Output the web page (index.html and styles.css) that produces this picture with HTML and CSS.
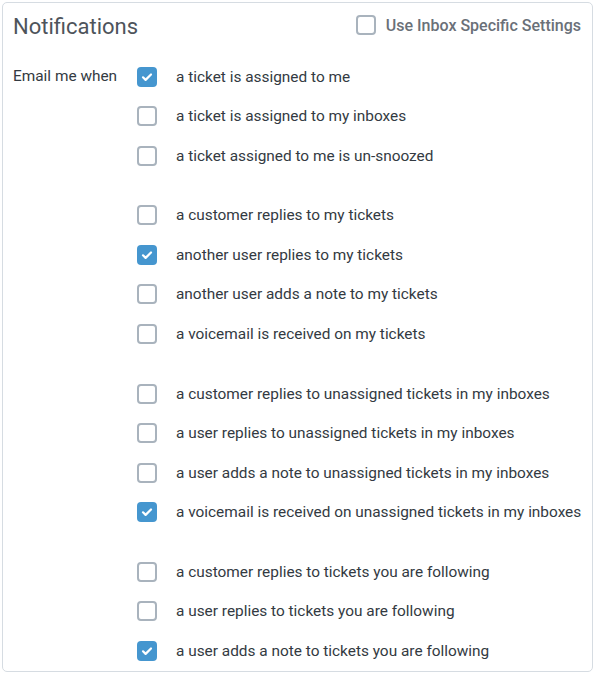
FILE: index.html
```html
<!DOCTYPE html>
<html>
<head>
<meta charset="utf-8">
<link rel="stylesheet" href="styles.css">
</head>
<body>
<div class="card">
  <div class="header">
    <h1 class="title">Notifications</h1>
    <label class="inbox-toggle">
      <span class="box"></span>
      <span class="inbox-label">Use Inbox Specific Settings</span>
    </label>
  </div>
  <div class="body">
    <div class="side-label">Email me when</div>
    <div class="options">
      <div class="group">
        <div class="row"><span class="box checked"><svg viewBox="0 0 20 20"><path d="M6 10.3l2.6 2.6L14 7.5"/></svg></span><span class="text">a ticket is assigned to me</span></div>
        <div class="row"><span class="box"></span><span class="text">a ticket is assigned to my inboxes</span></div>
        <div class="row"><span class="box"></span><span class="text">a ticket assigned to me is un-snoozed</span></div>
      </div>
      <div class="group">
        <div class="row"><span class="box"></span><span class="text">a customer replies to my tickets</span></div>
        <div class="row"><span class="box checked"><svg viewBox="0 0 20 20"><path d="M6 10.3l2.6 2.6L14 7.5"/></svg></span><span class="text">another user replies to my tickets</span></div>
        <div class="row"><span class="box"></span><span class="text">another user adds a note to my tickets</span></div>
        <div class="row"><span class="box"></span><span class="text">a voicemail is received on my tickets</span></div>
      </div>
      <div class="group">
        <div class="row"><span class="box"></span><span class="text">a customer replies to unassigned tickets in my inboxes</span></div>
        <div class="row"><span class="box"></span><span class="text">a user replies to unassigned tickets in my inboxes</span></div>
        <div class="row"><span class="box"></span><span class="text">a user adds a note to unassigned tickets in my inboxes</span></div>
        <div class="row"><span class="box checked"><svg viewBox="0 0 20 20"><path d="M6 10.3l2.6 2.6L14 7.5"/></svg></span><span class="text">a voicemail is received on unassigned tickets in my inboxes</span></div>
      </div>
      <div class="group">
        <div class="row"><span class="box"></span><span class="text">a customer replies to tickets you are following</span></div>
        <div class="row"><span class="box"></span><span class="text">a user replies to tickets you are following</span></div>
        <div class="row"><span class="box checked"><svg viewBox="0 0 20 20"><path d="M6 10.3l2.6 2.6L14 7.5"/></svg></span><span class="text">a user adds a note to tickets you are following</span></div>
      </div>
    </div>
  </div>
</div>
</body>
</html>
```
FILE: styles.css
```css
* { box-sizing: border-box; }
html, body { margin: 0; padding: 0; background: #fff; }
body {
  font-family: Roboto, "Liberation Sans", sans-serif;
  color: #333a42;
}
.card {
  margin: 2px;
  width: 591px;
  height: 670px;
  border: 1px solid #d6dce2;
  border-radius: 5px;
  background: #fff;
}
.header {
  display: flex;
  align-items: center;
  justify-content: space-between;
  height: 44px;
  padding: 0 11px 0 10px;
}
.title {
  margin: 3px 0 0;
  font-size: 22px;
  font-weight: 400;
  color: #4e545b;
}
.inbox-toggle {
  display: flex;
  align-items: center;
  gap: 10px;
}
.inbox-label {
  font-size: 16px;
  font-weight: 500;
  color: #6a7078;
}
.body {
  display: flex;
  padding: 10px 0 0 10px;
}
.side-label {
  width: 124px;
  font-size: 15.4px;
  line-height: 39.5px;
  color: #333a42;
}
.group + .group { margin-top: 20.2px; }
.row {
  display: flex;
  align-items: center;
  height: 39.5px;
}
.box {
  display: block;
  flex: none;
  width: 20px;
  height: 20px;
  border: 2px solid #a9b3bd;
  border-radius: 4px;
  background: #fff;
}
.box.checked {
  border: none;
  background: #4596cf;
}
.box svg { display: block; width: 20px; height: 20px; }
.box svg path { fill: none; stroke: #fff; stroke-width: 2.2; stroke-linecap: round; stroke-linejoin: round; }
.text {
  margin-left: 19px;
  font-size: 15.4px;
  color: #333a42;
}
```
